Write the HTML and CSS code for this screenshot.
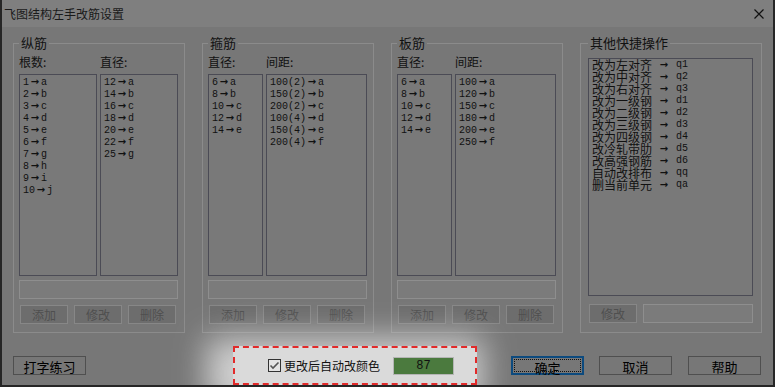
FILE: index.html
```html
<!DOCTYPE html>
<html lang="zh-CN">
<head>
  <meta charset="UTF-8">
  <meta name="viewport" content="width=device-width, initial-scale=1.0">
  <title>飞图结构左手改筋设置</title>
  <link rel="stylesheet" href="styles.css">
</head>
<body>
  <div class="window">
    <div class="titlebar">
      <span class="title">飞图结构左手改筋设置</span>
      <svg class="close" width="10" height="10" viewBox="0 0 10 10">
        <path d="M0.5 0.5 L9.5 9.5 M9.5 0.5 L0.5 9.5" stroke="#111" stroke-width="1.2" fill="none"/>
      </svg>
    </div>

    <div class="content">
      <div class="groups">
        <fieldset class="group">
          <legend>纵筋</legend>
          <div class="cols">
            <div class="label">根数:</div>
            <div class="label">直径:</div>
            <div class="list" id="zj-count"></div>
            <div class="list" id="zj-dia"></div>
          </div>
          <div class="textbox"></div>
          <div class="actions">
            <button disabled>添加</button>
            <button disabled>修改</button>
            <button disabled>删除</button>
          </div>
        </fieldset>

        <fieldset class="group">
          <legend>箍筋</legend>
          <div class="cols cols-narrow">
            <div class="label">直径:</div>
            <div class="label">间距:</div>
            <div class="list" id="gj-dia"></div>
            <div class="list" id="gj-space"></div>
          </div>
          <div class="textbox"></div>
          <div class="actions">
            <button disabled>添加</button>
            <button disabled>修改</button>
            <button disabled>删除</button>
          </div>
        </fieldset>

        <fieldset class="group">
          <legend>板筋</legend>
          <div class="cols cols-narrow">
            <div class="label">直径:</div>
            <div class="label">间距:</div>
            <div class="list" id="bj-dia"></div>
            <div class="list" id="bj-space"></div>
          </div>
          <div class="textbox"></div>
          <div class="actions">
            <button disabled>添加</button>
            <button disabled>修改</button>
            <button disabled>删除</button>
          </div>
        </fieldset>

        <fieldset class="group group-other">
          <legend>其他快捷操作</legend>
          <div class="list list-tall" id="shortcuts"></div>
          <div class="other-actions">
            <button disabled>修改</button>
            <div class="textbox"></div>
          </div>
        </fieldset>
      </div>

      <div class="footer">
        <button class="btn">打字练习</button>
        <div class="highlight">
          <label class="check">
            <svg width="13" height="13" viewBox="0 0 13 13">
              <rect x="0.5" y="0.5" width="12" height="12" fill="#e4e4e4" stroke="#333"/>
              <path d="M2.5 6.5 L5 9 L10.5 3.5" stroke="#555" stroke-width="1.6" fill="none"/>
            </svg>
            更改后自动改颜色
          </label>
          <div class="color-box">87</div>
        </div>
        <button class="btn btn-default">确定</button>
        <button class="btn btn-cancel">取消</button>
        <button class="btn btn-help">帮助</button>
      </div>
    </div>
  </div>

  <script>
    const lists = {
      'zj-count': [['1', 'a'], ['2', 'b'], ['3', 'c'], ['4', 'd'], ['5', 'e'], ['6', 'f'], ['7', 'g'], ['8', 'h'], ['9', 'i'], ['10', 'j']],
      'zj-dia': [['12', 'a'], ['14', 'b'], ['16', 'c'], ['18', 'd'], ['20', 'e'], ['22', 'f'], ['25', 'g']],
      'gj-dia': [['6', 'a'], ['8', 'b'], ['10', 'c'], ['12', 'd'], ['14', 'e']],
      'gj-space': [['100(2)', 'a'], ['150(2)', 'b'], ['200(2)', 'c'], ['100(4)', 'd'], ['150(4)', 'e'], ['200(4)', 'f']],
      'bj-dia': [['6', 'a'], ['8', 'b'], ['10', 'c'], ['12', 'd'], ['14', 'e']],
      'bj-space': [['100', 'a'], ['120', 'b'], ['150', 'c'], ['180', 'd'], ['200', 'e'], ['250', 'f']],
    };

    const shortcuts = [
      ['改为左对齐', 'q1'], ['改为中对齐', 'q2'], ['改为右对齐', 'q3'],
      ['改为一级钢', 'd1'], ['改为二级钢', 'd2'], ['改为三级钢', 'd3'], ['改为四级钢', 'd4'],
      ['改冷轧带肋', 'd5'], ['改高强钢筋', 'd6'], ['自动改排布', 'qq'], ['删当前单元', 'qa'],
    ];

    Object.keys(lists).forEach(id => {
      document.getElementById(id).innerHTML = lists[id]
        .map(([key, code]) => `<div class="item">${key}<span class="ar">→</span>${code}</div>`)
        .join('');
    });

    document.getElementById('shortcuts').innerHTML = shortcuts
      .map(([name, code]) => `<div class="sc-item"><span class="sc-name">${name}</span><span class="ar">→</span><span class="sc-code">${code}</span></div>`)
      .join('');
  </script>
</body>
</html>
```

FILE: styles.css
```css
body {
  margin: 0;
  background-color: #777;
  font-family: "Noto Sans CJK SC", sans-serif;
  font-size: 12px;
  color: #111;
}

.window {
  width: 775px;
  height: 387px;
  box-sizing: border-box;
  border: 2px solid #262626;
  border-top: 0;
  background-color: #777;
  overflow: hidden;
}

.titlebar {
  height: 27px;
  background-color: #7f7f7f;
  display: flex;
  align-items: center;
  justify-content: space-between;
  padding: 0 9px 0 2px;
}

.title {
  color: #1a1a1a;
}

.content {
  padding-left: 11px;
}

.groups {
  display: grid;
  grid-template-columns: 172px 172px 172px 182px;
  column-gap: 17px;
  margin-top: 9px;
}

.group {
  margin: 0;
  min-width: 0;
  border: 1px solid #8b8b8b;
  padding: 5px 6px 8px 5px;
}

.group legend {
  padding: 0 2px;
  line-height: 14px;
  font-size: 13px;
}

.cols {
  display: grid;
  grid-template-columns: 78px 78px;
  column-gap: 3px;
}

.cols-narrow {
  grid-template-columns: 55px 101px;
}

.label {
  line-height: 14px;
  margin-bottom: 5px;
}

.list {
  height: 202px;
  box-sizing: border-box;
  border: 1px solid #4b4b55;
  background-color: #797979;
  padding: 1px 0 0 3px;
  font-family: "Liberation Mono", monospace;
  font-size: 10px;
  color: #111;
}

.item {
  height: 12px;
  line-height: 12px;
  white-space: nowrap;
}

.ar {
  display: inline-block;
  width: 12px;
  text-align: center;
  font-family: "DejaVu Sans", sans-serif;
  font-size: 10px;
  font-weight: bold;
}

.textbox {
  height: 19px;
  box-sizing: border-box;
  border: 1px solid #8e8e8e;
  background-color: #7b7b7b;
  margin-top: 4px;
}

.actions {
  display: grid;
  grid-template-columns: repeat(3, 48px);
  column-gap: 6px;
  margin-top: 6px;
  padding-left: 1px;
}

button {
  margin: 0;
  padding: 0;
  height: 19px;
  box-sizing: border-box;
  font-family: inherit;
  font-size: 12px;
}

.actions button,
.other-actions button {
  background-color: #6d6d6d;
  border: 1px solid #878787;
  color: #4f4f4f;
}

.group-other {
  padding: 8px 8px 9px 7px;
}

.list-tall {
  height: 238px;
  padding: 0 0 0 3px;
}

.sc-item {
  display: flex;
  height: 12px;
  line-height: 12px;
  white-space: nowrap;
}

.sc-name {
  width: 66px;
  font-family: "Noto Sans CJK SC", sans-serif;
  font-size: 12px;
}

.sc-code {
  margin-left: 6px;
}

.other-actions {
  display: flex;
  margin-top: 8px;
}

.other-actions button {
  width: 48px;
  margin-left: 1px;
}

.other-actions .textbox {
  flex: 1;
  margin: 0 0 0 6px;
}

.footer {
  display: flex;
  align-items: center;
  height: 39px;
  margin-top: 13px;
}

.btn {
  width: 73px;
  background-color: #777;
  border: 1px solid #4f4f4f;
  color: #000;
  font-size: 13px;
}

.btn-default {
  margin-left: 34px;
  border: 2px solid #0c4a7e;
  outline: 1px dotted #111;
  outline-offset: -4px;
}

.btn-cancel {
  margin-left: 15px;
}

.btn-help {
  margin-left: 16px;
}

.highlight {
  box-sizing: border-box;
  width: 244px;
  height: 39px;
  margin-left: 147px;
  border: 2px dashed #e22a2a;
  background-color: #dadada;
  box-shadow: -10px 8px 32px 16px rgba(216, 216, 216, 0.92);
  display: flex;
  align-items: center;
  padding-left: 33px;
}

.check {
  display: flex;
  align-items: center;
  gap: 3px;
  color: #111;
  font-size: 12px;
}

.color-box {
  width: 61px;
  height: 18px;
  margin-left: 13px;
  box-sizing: border-box;
  border: 1px solid #b5b5b5;
  background-color: #4b7a3e;
  text-align: center;
  line-height: 16px;
  font-family: "Liberation Mono", monospace;
  font-size: 12px;
  color: #111;
}
```
